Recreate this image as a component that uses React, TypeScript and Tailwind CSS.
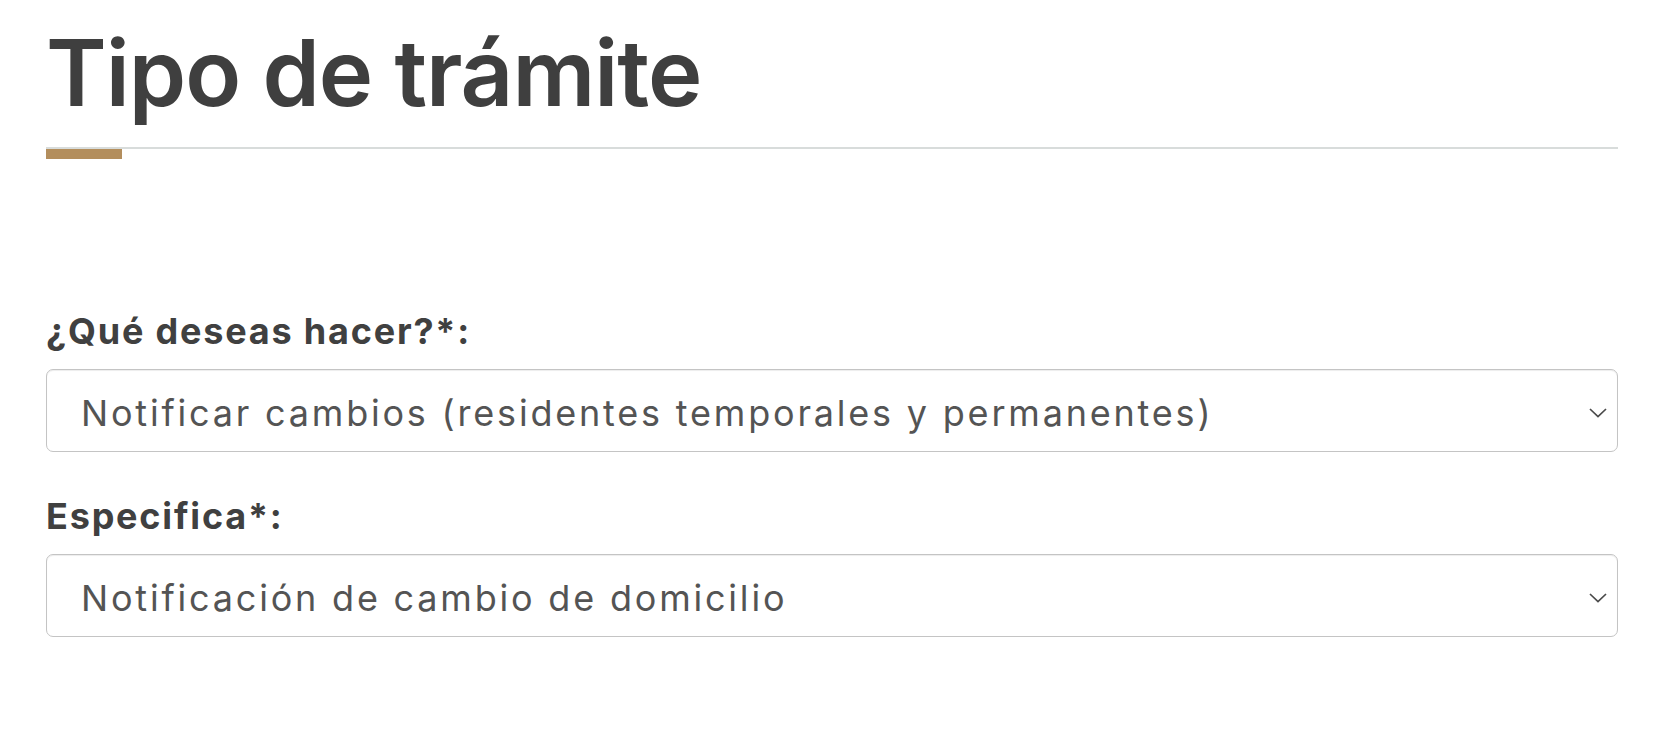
import { ReactNode } from "react";

function Chevron() {
  return (
    <svg width="18" height="10" viewBox="0 0 18 10" fill="none">
      <polyline points="1,1 9,8.5 17,1" stroke="#4a4a4a" strokeWidth="1.7" />
    </svg>
  );
}

function FakeSelect({ children }: { children: ReactNode }) {
  return (
    <div className="flex h-[83px] items-center justify-between rounded-[7px] border-[1.5px] border-[#c4c4c4] pl-[34px] pr-[10px] pt-[5px] shadow-[inset_0_1px_1px_rgba(0,0,0,0.075)]">
      <span className="text-[36px] leading-none tracking-[2.8px] text-[#545454]">
        {children}
      </span>
      <Chevron />
    </div>
  );
}

function Field({ label, value }: { label: string; value: string }) {
  return (
    <div className="flex flex-col gap-[20px]">
      <label className="text-[36px] font-bold leading-none tracking-[1.8px] text-[#404040]">
        {label}
      </label>
      <FakeSelect>{value}</FakeSelect>
    </div>
  );
}

export default function App() {
  return (
    <div
      className="min-h-screen bg-white pl-[46px] pr-[56px] pt-[27px]"
      style={{ fontFamily: "Inter, 'Noto Sans', sans-serif" }}
    >
      <h1 className="text-[92px] font-semibold leading-none tracking-[-1px] text-[#3f3f3f]">
        Tipo de trámite
      </h1>
      <div className="mt-[28px] h-[2px] bg-[#d8dcdb]" />
      <div className="h-[10px] w-[76px] bg-[#b38e5d]" />

      <div className="mt-[154px] flex flex-col gap-[46px]">
        <Field
          label="¿Qué deseas hacer?*:"
          value="Notificar cambios (residentes temporales y permanentes)"
        />
        <Field
          label="Especifica*:"
          value="Notificación de cambio de domicilio"
        />
      </div>
    </div>
  );
}
